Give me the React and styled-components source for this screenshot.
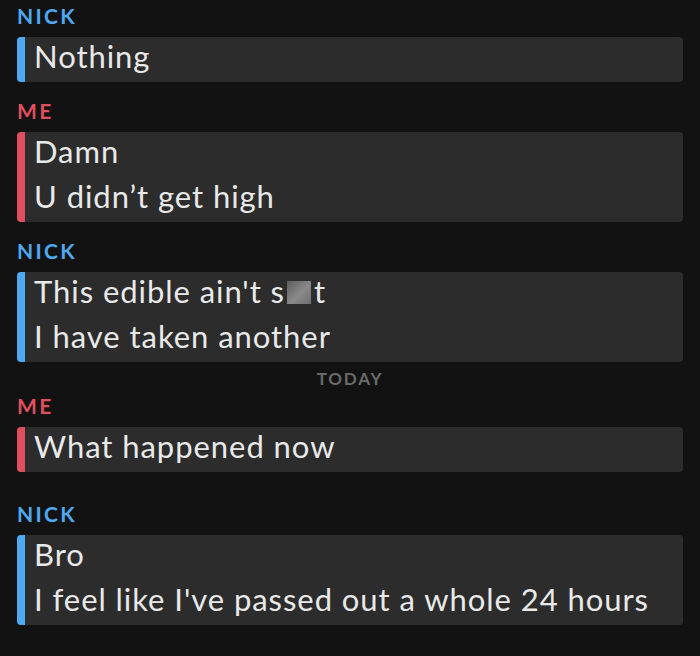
import React from 'react';
import styled, { createGlobalStyle } from 'styled-components';

const GlobalStyle = createGlobalStyle`
  html, body {
    margin: 0;
    padding: 0;
    background: #121212;
  }
  body {
    font-family: 'Lato', 'Noto Sans', sans-serif;
  }
`;

const colors = {
  nick: '#4ea9f2',
  me: '#df4f5e',
};

const Page = styled.div`
  width: 700px;
  height: 656px;
  box-sizing: border-box;
  padding: 4px 17px 0;
  background: #121212;
  overflow: hidden;
`;

const Group = styled.div`
  display: flex;
  flex-direction: column;
  gap: 9px;
  margin-top: ${(props) => props.top || 0}px;
`;

const Sender = styled.div`
  font-size: 21px;
  line-height: 24px;
  height: 24px;
  font-weight: 700;
  letter-spacing: 2.3px;
  color: ${(props) => props.color};
`;

const Bubble = styled.div`
  display: flex;
  background: #2c2c2c;
  border-radius: 4px;
  overflow: hidden;
`;

const Bar = styled.div`
  width: 8px;
  flex-shrink: 0;
  background: ${(props) => props.color};
`;

const Lines = styled.div`
  display: flex;
  flex-direction: column;
  padding-left: 9px;
`;

const Line = styled.div`
  font-size: 31px;
  line-height: 38px;
  padding-bottom: 7px;
  letter-spacing: 0.95px;
  color: #e9e9e9;
  white-space: nowrap;
`;

const Censor = styled.span`
  display: inline-block;
  width: 24px;
  height: 23px;
  margin: 0 3px 0 2px;
  vertical-align: -1px;
  background: linear-gradient(135deg, #5c5c5c 0%, #8a8a8a 55%, #6d6d6d 100%);
  filter: blur(0.6px);
`;

const DayDivider = styled.div`
  margin-top: 7px;
  text-align: center;
  font-size: 17px;
  line-height: 20px;
  font-weight: 700;
  letter-spacing: 1.8px;
  color: #6b6b6b;
`;

const Message = ({ who, top, lines }) => {
  const color = who === 'ME' ? colors.me : colors.nick;
  return (
    <Group top={top}>
      <Sender color={color}>{who}</Sender>
      <Bubble>
        <Bar color={color} />
        <Lines>
          {lines.map((line, i) => (
            <Line key={i}>{line}</Line>
          ))}
        </Lines>
      </Bubble>
    </Group>
  );
};

const App = () => {
  return (
    <>
      <GlobalStyle />
      <Page>
        <Message who="NICK" lines={['Nothing']} />
        <Message who="ME" top={17} lines={['Damn', 'U didn\u2019t get high']} />
        <Message
          who="NICK"
          top={17}
          lines={[
            <>This edible ain't s<Censor />t</>,
            'I have taken another',
          ]}
        />
        <DayDivider>TODAY</DayDivider>
        <Message who="ME" top={5} lines={['What happened now']} />
        <Message who="NICK" top={30} lines={['Bro', "I feel like I've passed out a whole 24 hours"]} />
      </Page>
    </>
  );
};

export default App;
